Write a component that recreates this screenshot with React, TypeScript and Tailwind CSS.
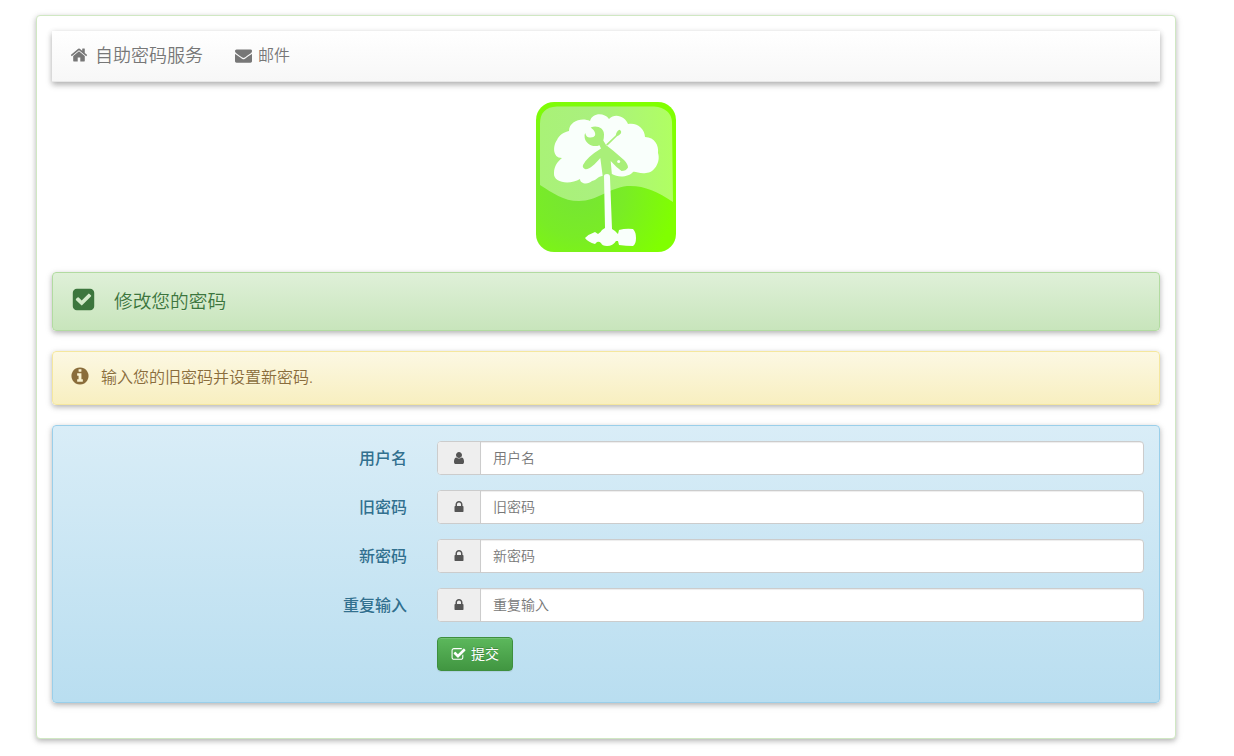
import React from "react";

const PATHS = {
  home: "M1472 992v480q0 26-19 45t-45 19h-384v-384h-256v384h-384q-26 0-45-19t-19-45v-480q0-1 .5-3t.5-3l575-474 575 474q1 2 1 6zm223-69l-62 74q-8 9-21 11h-3q-13 0-21-7l-692-577-692 577q-12 8-24 7-13-2-21-11l-62-74q-8-10-7-23.5t11-21.5l719-599q32-26 76-26t76 26l244 204v-195q0-14 9-23t23-9h192q14 0 23 9t9 23v408l219 182q10 8 11 21.5t-7 23.5z",
  envelope:
    "M1792 710v794q0 66-47 113t-113 47h-1472q-66 0-113-47t-47-113v-794q44 49 101 87 362 246 497 345 57 42 92.5 65.5t94.5 48 110 24.5h2q51 0 110-24.5t94.5-48 92.5-65.5q170-123 498-345 57-39 100-87zm0-294q0 79-49 151t-122 123q-376 261-468 325-10 7-42.5 31t-54 38.5-52 32.5-57.5 27-50 9h-2q-23 0-50-9t-57.5-27-52-32.5-54-38.5-42.5-31q-91-64-262-182.5t-205-142.5q-62-42-117-115.5t-55-136.5q0-78 41.5-130t118.5-52h1472q65 0 112.5 47t47.5 113z",
  checkSquare:
    "M813 1299l614-614q19-19 19-45t-19-45l-102-102q-19-19-45-19t-45 19l-467 467-211-211q-19-19-45-19t-45 19l-102 102q-19 19-19 45t19 45l358 358q19 19 45 19t45-19zm851-883v960q0 119-84.5 203.5t-203.5 84.5h-960q-119 0-203.5-84.5t-84.5-203.5v-960q0-119 84.5-203.5t203.5-84.5h960q119 0 203.5 84.5t84.5 203.5z",
  info: "M1152 1376v-160q0-14-9-23t-23-9h-96v-512q0-14-9-23t-23-9h-320q-14 0-23 9t-9 23v160q0 14 9 23t23 9h96v320h-96q-14 0-23 9t-9 23v160q0 14 9 23t23 9h448q14 0 23-9t9-23zm-128-896v-160q0-14-9-23t-23-9h-192q-14 0-23 9t-9 23v160q0 14 9 23t23 9h192q14 0 23-9t9-23zm640 416q0 209-103 385.5t-279.5 279.5-385.5 103-385.5-103-279.5-279.5-103-385.5 103-385.5 279.5-279.5 385.5-103 385.5 103 279.5 279.5 103 385.5z",
  user: "M1536 1399q0 109-62.5 187t-150.5 78h-854q-88 0-150.5-78t-62.5-187q0-85 8.5-160.5t31.5-152 58.5-131 94-89 134.5-34.5q131 128 313 128t313-128q76 0 134.5 34.5t94 89 58.5 131 31.5 152 8.5 160.5zm-256-887q0 159-112.5 271.5t-271.5 112.5-271.5-112.5-112.5-271.5 112.5-271.5 271.5-112.5 271.5 112.5 112.5 271.5z",
  lock: "M640 768h512v-192q0-106-75-181t-181-75-181 75-75 181v192zm832 96v576q0 40-28 68t-68 28h-960q-40 0-68-28t-28-68v-576q0-40 28-68t68-28h32v-192q0-184 132-316t316-132 316 132 132 316v192h32q40 0 68 28t28 68z",
  checkSquareO:
    "M1472 930v318q0 119-84.5 203.5t-203.5 84.5h-832q-119 0-203.5-84.5t-84.5-203.5v-832q0-119 84.5-203.5t203.5-84.5h832q63 0 117 25 15 7 18 23 3 17-9 29l-49 49q-10 10-23 10-3 0-9-2-23-6-45-6h-832q-66 0-113 47t-47 113v832q0 66 47 113t113 47h832q66 0 113-47t47-113v-254q0-13 9-22l64-64q10-10 23-10 6 0 12 3 20 8 20 29zm231-489l-814 814q-24 24-57 24t-57-24l-430-430q-24-24-24-57t24-57l110-110q24-24 57-24t57 24l263 263 647-647q24-24 57-24t57 24l110 110q24 24 24 57t-24 57z",
};

type IconName = keyof typeof PATHS;

function Icon({ name, className }: { name: IconName; className: string }) {
  return (
    <svg viewBox="0 0 1792 1792" className={`shrink-0 ${className}`} fill="currentColor" aria-hidden="true">
      <path d={PATHS[name]} />
    </svg>
  );
}

function Logo() {
  return (
    <svg viewBox="0 0 140 150" className="mx-auto mt-5 block h-[150px] w-[140px]" aria-hidden="true">
      <defs>
        <radialGradient id="base" gradientUnits="userSpaceOnUse" cx="42" cy="88" r="104">
          <stop offset="0" stopColor="#76e436" />
          <stop offset="0.45" stopColor="#79ec26" />
          <stop offset="0.95" stopColor="#80ff00" />
        </radialGradient>
        <linearGradient id="gloss" x1="0" y1="0" x2="1" y2="0">
          <stop offset="0" stopColor="#a9f277" />
          <stop offset="0.45" stopColor="#aaf07f" />
          <stop offset="1" stopColor="#b0ff62" />
        </linearGradient>
      </defs>
      <rect width="140" height="150" rx="18" fill="url(#base)" />
      <path
        d="M4 22Q4 5 21 4.500H118Q135 6 136 20L137 100C121 89 107 83 91 84C73 86 61 99 43 99C27 99 17 91 4 83Z"
        fill="url(#gloss)"
      />
      <path
        d="M26 56C16 56 17 43 21 38C23 33 28 30 33 29C33 19 46 15 54 19C56 11 68 10 73 17C80 10 90 16 92 22C101 20 109 27 109 35C119 35 123 44 122 51C125 60 118 71 110 71C104 72 99 69 97 70C93 75 82 76 76 72L66 74C61 75 61 78 56 79C52 83 44 82 44 77C34 83 17 81 18 71C18 64 22 59 26 56Z"
        fill="#f9fffb"
      />
      <g fill="#a9ef79">
        <path d="M54.700 25.500C61 23 68 26 68 32.500Q68 36 67.300 38.500L70 43L77.300 48.700L88 58Q92 62 92 65.500Q90 69 85.500 69Q80 65 74.700 59L76 74H66.700L64.300 56C59 62 54 67.500 49.500 67.300Q46 66 47 63Q51 55 65 46.500L63.500 43.200C57 46 50 42 48.700 36Q48 33 49.200 31C50 34.500 52 36 54.700 35.500Q58 35.500 59 33.500Q60 29.500 54.700 25.500Z" />
        <path d="M70 42.500L79.800 33.200Q80.500 29 83.500 27.800Q86 29 84.800 31.500Q83 33.500 81 34.200L71.500 43.500Z" />
      </g>
      <circle cx="82.700" cy="59.500" r="1.500" fill="#f9fffb" />
      <path
        d="M68 74Q68 72 71 72Q74 72 74 75L76 127L79 129L82 132L83 128Q90 126 97 127Q100 130 100 136Q100 142 97 144Q90 144 83 143L82 139H80Q77 144 71 144Q66 144 65 141Q63 139 61 140L59 142Q52 140 49 136Q53 132 59 130L62 132Q65 130 66 128L69 126Z"
        fill="#f9fffb"
      />
    </svg>
  );
}

const FIELDS: { label: string; icon: IconName; type: string }[] = [
  { label: "用户名", icon: "user", type: "text" },
  { label: "旧密码", icon: "lock", type: "password" },
  { label: "新密码", icon: "lock", type: "password" },
  { label: "重复输入", icon: "lock", type: "password" },
];

const CARD_SHADOW = "shadow-[0_2px_5px_rgba(0,0,0,0.22),0_2px_9px_rgba(0,0,0,0.1)]";

export default function App() {
  return (
    <div className="h-[756px] overflow-hidden bg-white pt-[15px] pl-9 font-['Noto_Sans','Noto_Sans_CJK_SC',sans-serif] text-base">
      <main className={`h-[724px] w-[1140px] rounded border border-[#d0e8c3] bg-white p-[15px] ${CARD_SHADOW}`}>
        <nav className="flex h-[51px] items-center border-b border-[#e7e7e7] bg-linear-to-b from-white to-[#f7f7f7] pb-0.5 pl-[18px] font-[350] text-[#777] shadow-[0_3px_6px_rgba(0,0,0,0.25),0_1px_6px_rgba(0,0,0,0.1)]">
          <a href="#home" className="flex items-center text-[18px] leading-5">
            <Icon name="home" className="mr-[7px] size-[18px]" />
            自助密码服务
          </a>
          <a href="#mail" className="ml-8 flex items-center leading-5">
            <Icon name="envelope" className="mr-[6px] size-[17px]" />
            邮件
          </a>
        </nav>

        <Logo />

        <div className={`mt-5 flex h-[59px] items-center rounded border border-[#b2dba1] bg-linear-to-b from-[#dff0d8] to-[#c8e5bc] pb-1 pl-[18px] font-[350] text-[#3c763d] ${CARD_SHADOW}`}>
          <Icon name="checkSquare" className="mr-[18px] size-[25px]" />
          <span className="mt-1 text-[18.7px] [text-shadow:0_1px_0_rgba(255,255,255,0.2)]">修改您的密码</span>
        </div>

        <div className={`mt-5 flex h-[54px] items-center rounded border border-[#f5e79e] bg-linear-to-b from-[#fcf8e3] to-[#f8efc0] pb-0.5 pl-[17px] font-[350] text-[#8a6d3b] ${CARD_SHADOW}`}>
          <Icon name="info" className="mr-[11px] mb-0.5 size-5" />
          <span className="[text-shadow:0_1px_0_rgba(255,255,255,0.2)]">输入您的旧密码并设置新密码.</span>
        </div>

        <form className={`mt-5 h-[278px] rounded border border-[#9acfea] bg-linear-to-b from-[#d9edf7] to-[#b9def0] p-[15px] ${CARD_SHADOW}`}>
          {FIELDS.map((f) => (
            <div key={f.label} className="mb-[15px] flex h-[34px] items-center">
              <label className="w-[339px] text-right font-medium text-[#31708f] [text-shadow:0_1px_0_rgba(255,255,255,0.2)]">
                {f.label}
              </label>
              <div className="ml-[30px] flex h-[34px] flex-1 overflow-hidden rounded border border-[#ccc] bg-white">
                <span className="flex w-[43px] items-center justify-center border-r border-[#ccc] bg-[#eee] text-[#555]">
                  <Icon name={f.icon} className="size-[14px]" />
                </span>
                <input
                  type={f.type}
                  placeholder={f.label}
                  className="min-w-0 flex-1 px-3 text-sm font-[350] shadow-[inset_0_1px_1px_rgba(0,0,0,0.075)] outline-none placeholder:text-[#777]"
                />
              </div>
            </div>
          ))}
          <button
            type="button"
            className="ml-[369px] flex h-[34px] w-[76px] items-center rounded border border-[#3e8f3e] bg-linear-to-b from-[#5cb85c] to-[#419641] pl-[13px] text-sm text-white shadow-[inset_0_1px_0_rgba(255,255,255,0.15),0_1px_1px_rgba(0,0,0,0.075)] [text-shadow:0_-1px_0_rgba(0,0,0,0.2)]"
          >
            <Icon name="checkSquareO" className="mr-[5px] size-[15px]" />
            提交
          </button>
        </form>
      </main>
    </div>
  );
}
